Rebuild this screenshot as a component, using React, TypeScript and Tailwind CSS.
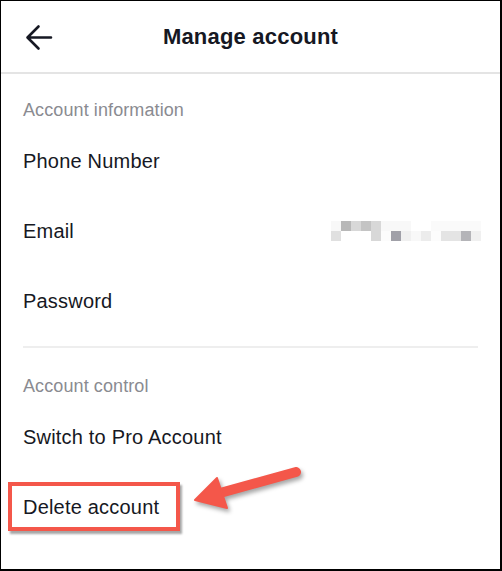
import React from "react";

const blurPixels = [
  ["bg-[#f8f8f8]", "bg-[#b8b8b8]", "bg-[#d8d8d8]", "bg-[#c4c4c4]", "bg-[#d8d8d8]", "bg-[#f8f8f8]", "bg-[#f8f8f8]", "bg-[#f8f8f8]", "bg-white", "bg-white", "bg-[#fafafa]", "bg-[#fafafa]", "bg-[#fafafa]", "bg-[#fafafa]", "bg-[#fafafa]"],
  ["bg-[#e0e0e0]", "bg-white", "bg-white", "bg-white", "bg-[#d8d8d8]", "bg-[#fcfcfc]", "bg-[#a0a0a8]", "bg-[#f0f0f0]", "bg-[#f8f8f8]", "bg-[#ececec]", "bg-[#fcfcfc]", "bg-[#e4e4e4]", "bg-[#e4e4e4]", "bg-[#b4b4b8]", "bg-[#f0f0f0]"],
];

function SectionLabel({ children, first }: { children: React.ReactNode; first?: boolean }) {
  return (
    <div
      className={`pl-[22px] pb-[5px] text-[18px] leading-[22px] tracking-[0.1px] text-[#8a8b91] ${
        first ? "pt-[25px]" : "pt-[27px]"
      }`}
    >
      {children}
    </div>
  );
}

function Row({ label, right }: { label: string; right?: React.ReactNode }) {
  return (
    <div className="h-[70px] flex items-center justify-between pl-[22px] pr-[19px] text-[20px] tracking-[0.2px] text-[#161823]">
      <span>{label}</span>
      {right}
    </div>
  );
}

export default function App() {
  return (
    <div
      className="relative w-[502px] h-[571px] bg-white border-l border-t border-r-2 border-b-2 border-black overflow-hidden"
      style={{ fontFamily: '"Liberation Sans", Arial, sans-serif' }}
    >
      {/* Header */}
      <div className="relative h-[73px] border-b-2 border-[#e4e4e4] flex items-center justify-center">
        <svg className="absolute left-[24px] top-[23px]" width="28" height="28" viewBox="0 0 28 28" fill="none">
          <path d="M26 13.5H3M13.5 2.5L2.5 13.5L13.5 24.5" stroke="#161823" strokeWidth="2.6" strokeLinecap="round" strokeLinejoin="round" />
        </svg>
        <h1 className="text-[22px] font-bold tracking-[0.2px] text-[#161823] -mt-[1px]">Manage account</h1>
      </div>

      <SectionLabel first>Account information</SectionLabel>
      <Row label="Phone Number" />
      <Row
        label="Email"
        right={
          <div className="flex flex-col">
            {blurPixels.map((row, i) => (
              <div key={i} className="flex">
                {row.map((c, j) => (
                  <div key={j} className={`w-[10px] h-[10px] ${c}`} />
                ))}
              </div>
            ))}
          </div>
        }
      />
      <Row label="Password" />

      <div className="mt-[10px] mx-[22px] h-[2px] bg-[#eeeeee]" />

      <SectionLabel>Account control</SectionLabel>
      <Row label="Switch to Pro Account" />
      <Row label="Delete account" />

      {/* Annotation box */}
      <div className="absolute left-[7px] top-[481px] w-[172px] h-[49px] border-4 border-[#f4574a] shadow-[2px_3px_2px_rgba(0,0,0,0.35)]" />

      {/* Annotation arrow */}
      <svg
        className="absolute left-[184px] top-[459px]"
        width="124"
        height="60"
        viewBox="185 460 124 60"
        style={{ filter: "drop-shadow(2px 3px 2px rgba(0,0,0,0.35))" }}
      >
        <line x1="220" y1="493" x2="296" y2="472" stroke="#f4574a" strokeWidth="10" strokeLinecap="round" />
        <polygon points="195,500 217,478 227,508" fill="#f4574a" stroke="#f4574a" strokeWidth="2" strokeLinejoin="round" />
      </svg>
    </div>
  );
}
